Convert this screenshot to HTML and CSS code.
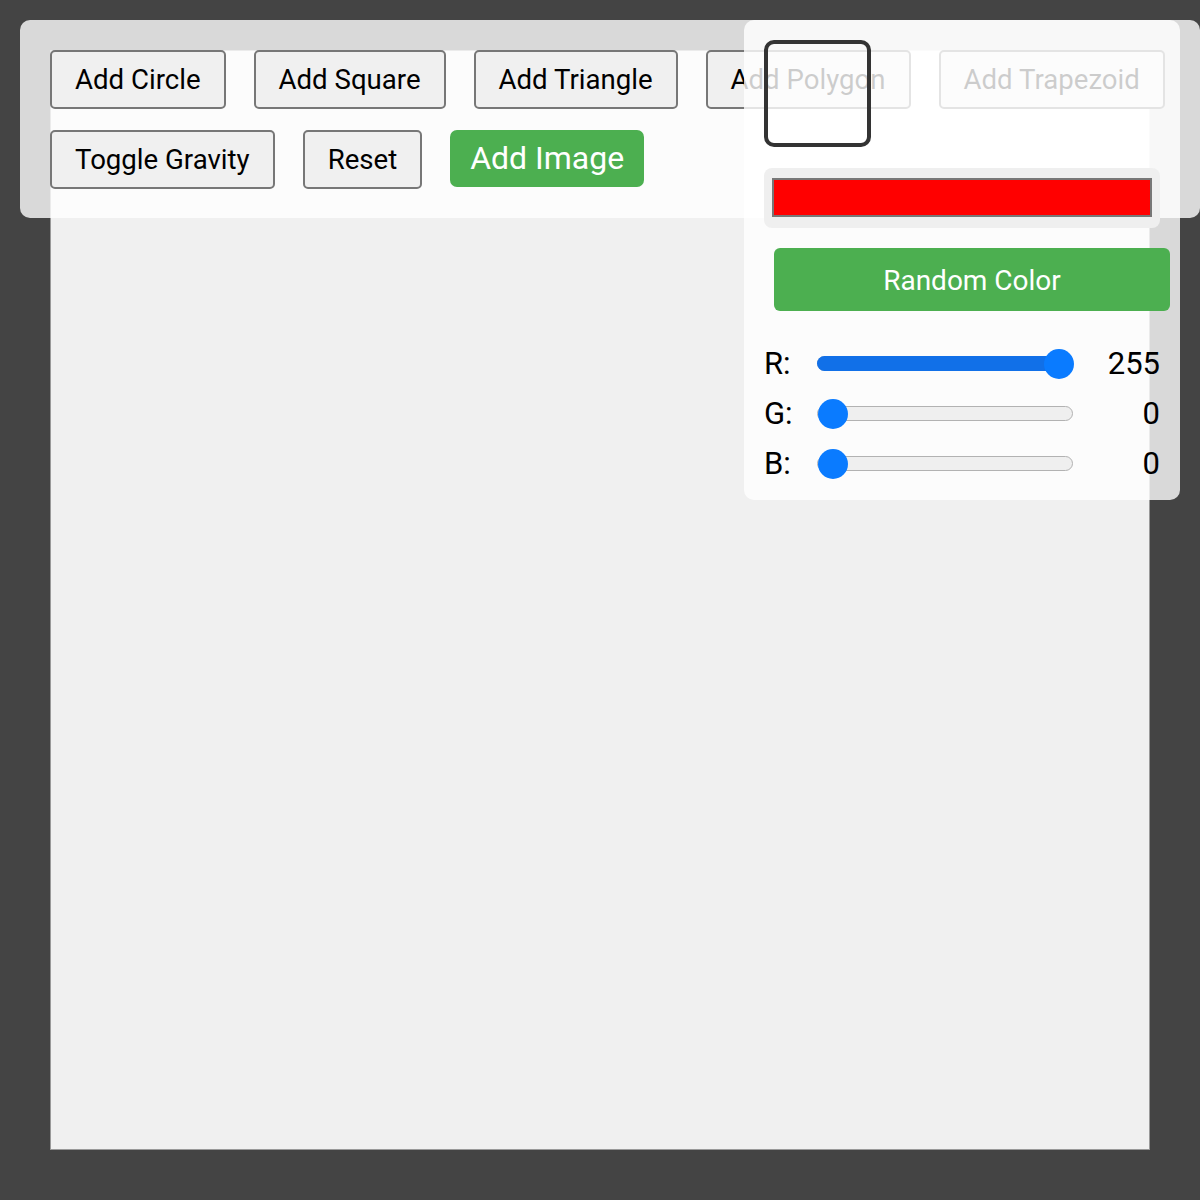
FILE: index.html
```html
<!DOCTYPE html>
<html lang="en">
<head>
    <meta charset="UTF-8">
    <meta name="viewport" content="width=device-width, initial-scale=1.0">
    <title>Shape Playground</title>
    <link rel="stylesheet" href="styles.css">
</head>
<body>
    <div class="stage">
        <div class="board" id="board"></div>
    </div>

    <div class="toolbar">
        <div class="toolbar-row">
            <button class="tool-btn">Add Circle</button>
            <button class="tool-btn">Add Square</button>
            <button class="tool-btn">Add Triangle</button>
            <button class="tool-btn">Add Polygon</button>
            <button class="tool-btn">Add Trapezoid</button>
        </div>
        <div class="toolbar-row">
            <button class="tool-btn">Toggle Gravity</button>
            <button class="tool-btn">Reset</button>
            <button class="tool-btn image-btn">Add Image</button>
        </div>
    </div>

    <div class="color-panel">
        <div class="color-preview"></div>

        <div class="color-input">
            <div class="color-swatch"></div>
        </div>

        <button class="random-btn">Random Color</button>

        <div class="sliders">
            <div class="slider-row">
                <span class="slider-label">R:</span>
                <div class="slider-track">
                    <div class="slider-fill" style="width: 100%"></div>
                    <div class="slider-thumb" style="left: calc((100% - 28px) * 1)"></div>
                </div>
                <span class="slider-value">255</span>
            </div>
            <div class="slider-row">
                <span class="slider-label">G:</span>
                <div class="slider-track">
                    <div class="slider-thumb" style="left: 0"></div>
                </div>
                <span class="slider-value">0</span>
            </div>
            <div class="slider-row">
                <span class="slider-label">B:</span>
                <div class="slider-track">
                    <div class="slider-thumb" style="left: 0"></div>
                </div>
                <span class="slider-value">0</span>
            </div>
        </div>
    </div>
</body>
</html>
```

FILE: styles.css
```css
* {
    margin: 0;
    padding: 0;
    box-sizing: border-box;
}

body {
    font-family: Roboto, 'Liberation Sans', sans-serif;
    background: #444;
    color: #000;
    min-height: 100vh;
}

.stage {
    padding: 50px;
}

.board {
    width: 1100px;
    height: 1100px;
    background: #f0f0f0;
    border: 1px solid #999;
}

/* Toolbar floating over the board */
.toolbar {
    position: absolute;
    top: 20px;
    left: 20px;
    width: 1180px;
    padding: 30px 30px 29px;
    background: rgba(255, 255, 255, 0.8);
    border-radius: 10px;
    display: flex;
    flex-direction: column;
    gap: 21px;
}

.toolbar-row {
    display: flex;
    align-items: flex-start;
    gap: 28px;
}

.tool-btn {
    font-family: inherit;
    font-size: 27.6px;
    line-height: 32px;
    padding: 12px 23px 11px;
    background: #f0f0f0;
    color: #000;
    border: 2px solid #777;
    border-radius: 5px;
    cursor: pointer;
    white-space: nowrap;
}

.tool-btn.image-btn {
    background: #4caf50;
    color: #fff;
    border: none;
    border-radius: 7px;
    font-size: 32px;
    line-height: 37px;
    padding: 10px 20px;
}

/* Color panel */
.color-panel {
    position: absolute;
    top: 20px;
    left: 744px;
    width: 436px;
    padding: 20px 20px 23px;
    background: rgba(255, 255, 255, 0.8);
    border-radius: 10px;
}

.color-preview {
    width: 107px;
    height: 107px;
    border: 4px solid #333;
    border-radius: 10px;
}

.color-input {
    margin-top: 21px;
    height: 60px;
    padding: 10px 8px 11px;
    background: #efefef;
    border-radius: 8px;
}

.color-swatch {
    height: 100%;
    background: #ff0000;
    border: 2px solid #777;
}

.random-btn {
    display: block;
    width: 100%;
    margin: 20px 0 0 10px;
    padding: 16px 0 14px;
    font-family: inherit;
    font-size: 28px;
    line-height: 33px;
    color: #fff;
    background: #4caf50;
    border: none;
    border-radius: 6px;
    cursor: pointer;
}

.sliders {
    margin-top: 34px;
    display: flex;
    flex-direction: column;
    gap: 18px;
}

.slider-row {
    display: grid;
    grid-template-columns: 53px 256px 1fr;
    align-items: center;
    height: 32px;
    font-size: 31px;
}

.slider-track {
    position: relative;
    height: 15px;
    background: #efefef;
    border: 1px solid #b2b2b2;
    border-radius: 8px;
}

.slider-fill {
    position: absolute;
    top: -1px;
    bottom: -1px;
    left: -1px;
    background: #1170e8;
    border-radius: 8px;
}

.slider-thumb {
    position: absolute;
    top: 50%;
    width: 30px;
    height: 30px;
    margin-top: -15px;
    border-radius: 50%;
    background: #0a7bff;
}

.slider-value {
    text-align: right;
}
```
